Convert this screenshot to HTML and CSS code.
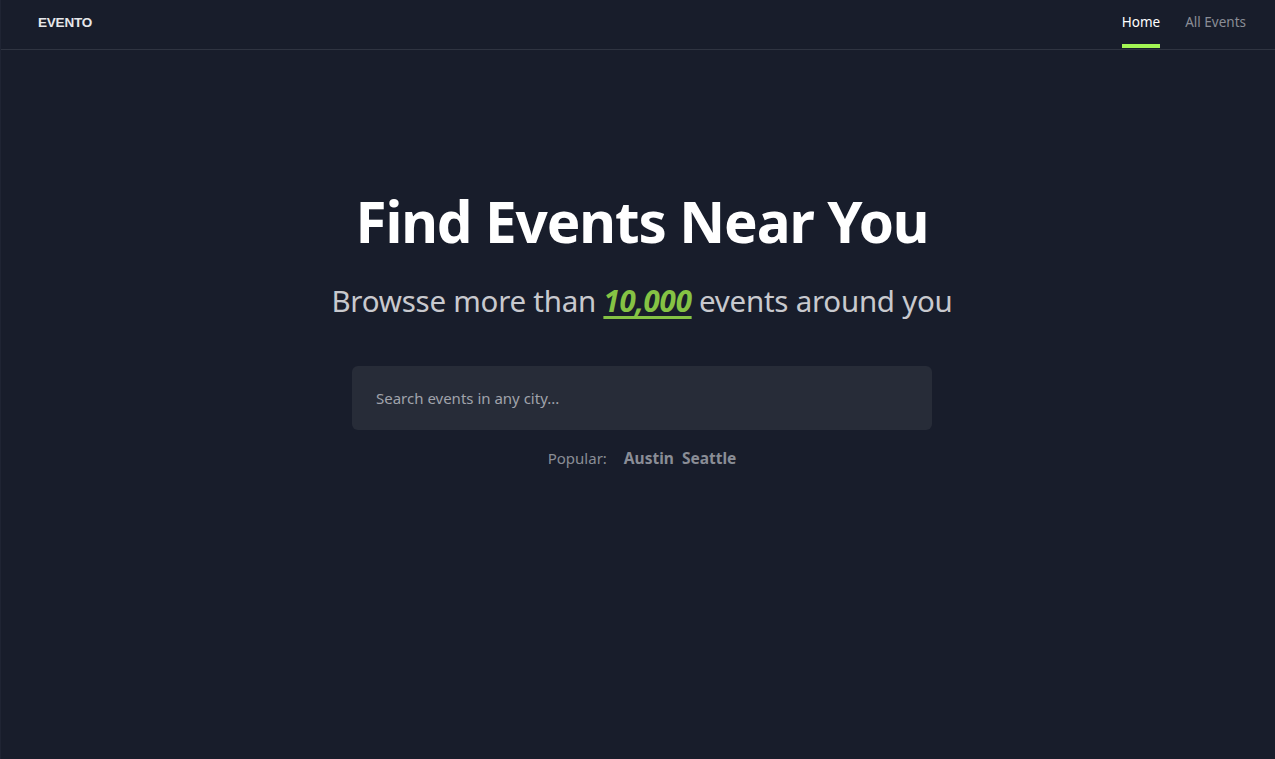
FILE: index.html
```html
<!DOCTYPE html>
<html lang="en">
<head>
<meta charset="utf-8">
<title>Evento</title>
<link rel="stylesheet" href="styles.css">
</head>
<body>
<div class="page">
  <header class="nav">
    <a class="logo" href="#">EVENTO</a>
    <nav class="links">
      <a class="link active" href="#">Home</a>
      <a class="link" href="#">All Events</a>
    </nav>
  </header>
  <main class="hero">
    <h1 class="title">Find Events Near You</h1>
    <p class="subtitle">Browsse more than <span class="count">10,000</span> events around you</p>
    <form class="search">
      <input class="search-input" type="text" placeholder="Search events in any city...">
    </form>
    <div class="popular">
      <span class="popular-label">Popular:</span>
      <a class="city" href="#">Austin</a>
      <a class="city" href="#">Seattle</a>
    </div>
  </main>
</div>
</body>
</html>
```

FILE: styles.css
```css
* { box-sizing: border-box; }
html, body { margin: 0; padding: 0; height: 100%; }
body {
  background: #181d2b;
  color: #fff;
  font-family: "Noto Sans", "Open Sans", sans-serif;
}
.page {
  min-height: 100vh;
  border-left: 1px solid #1f2433;
  display: flex;
  flex-direction: column;
}
.nav {
  height: 50px;
  border-bottom: 1px solid #2f3441;
  display: flex;
  align-items: stretch;
  justify-content: space-between;
  padding: 0 29px 0 37px;
}
.logo {
  display: flex;
  align-items: center;
  padding-bottom: 5px;
  font-family: "Liberation Sans", Arial, sans-serif;
  font-weight: 700;
  font-size: 13.5px;
  color: #e6e7ea;
  text-decoration: none;
  letter-spacing: -0.2px;
}
.links {
  display: flex;
  gap: 25px;
}
.link {
  display: flex;
  align-items: center;
  padding-bottom: 5px;
  font-size: 13.5px;
  color: #8a8d96;
  text-decoration: none;
  position: relative;
}
.link.active { color: #fff; }
.link.active::after {
  content: "";
  position: absolute;
  left: 0;
  right: 0;
  bottom: 1px;
  height: 4px;
  background: #a3f654;
}
.hero {
  display: flex;
  flex-direction: column;
  align-items: center;
  padding-top: 144px;
  padding-left: 8px;
}
.title {
  margin: 0;
  font-size: 56.5px;
  font-weight: 700;
  line-height: 1;
  letter-spacing: -1.1px;
  color: #fff;
}
.subtitle {
  margin: 29px 0 0;
  font-size: 29.5px;
  font-weight: 400;
  color: #c8c9ce;
  letter-spacing: -0.25px;
}
.count {
  color: #85c344;
  font-weight: 700;
  font-style: italic;
  text-decoration: underline;
  text-decoration-thickness: 3px;
  text-underline-offset: 4px;
}
.search {
  margin-top: 45px;
  width: 580px;
}
.search-input {
  width: 100%;
  height: 64px;
  border: none;
  border-radius: 6px;
  background: #272c38;
  padding: 0 24px;
  font-family: inherit;
  font-size: 15px;
  color: #fff;
  outline: none;
}
.search-input::placeholder { color: #a0a3ab; }
.popular {
  margin-top: 17px;
  display: flex;
  align-items: baseline;
  gap: 8px;
  font-size: 15px;
  color: #8a8d96;
}
.popular-label { margin-right: 9px; }
.city {
  color: #8a8d96;
  font-size: 15.5px;
  font-weight: 700;
  text-decoration: none;
}
```
